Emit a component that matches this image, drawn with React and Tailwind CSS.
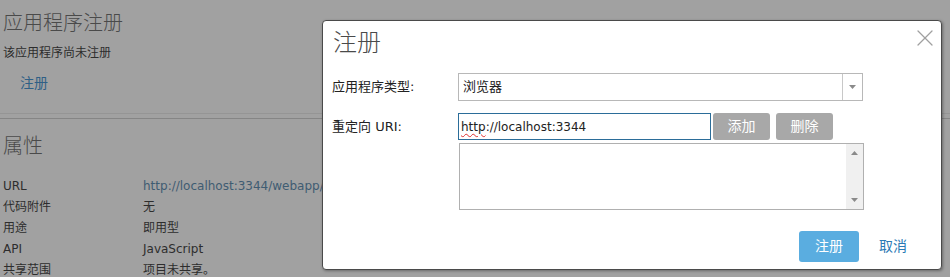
import { X } from 'lucide-react';

const font = { fontFamily: '"DejaVu Sans", "Noto Sans CJK SC", sans-serif' };

const props = [
  ['URL', 'http://localhost:3344/webapp/', true],
  ['代码附件', '无'],
  ['用途', '即用型'],
  ['API', 'JavaScript'],
  ['共享范围', '项目未共享。'],
];

function Caret({ up }) {
  return (
    <svg width="7" height="4" viewBox="0 0 7 4" className={up ? 'rotate-180' : ''}>
      <path d="M0 0 L7 0 L3.5 4 Z" fill="#8a8a8a" />
    </svg>
  );
}

function Dialog() {
  return (
    <div className="absolute left-[322px] top-[20px] w-[620px] h-[250px] bg-white rounded-[4px] border border-[#4a4a4a] shadow-[1px_1px_3px_rgba(0,0,0,0.35)] flex flex-col">
      <div className="flex justify-between items-start pl-[10px] pr-[2px] pt-[6px]">
        <h2 className="text-[24px] leading-[32px] font-light text-[#4a4a4a]">注册</h2>
        <X size={28} strokeWidth={1.1} className="-mt-[3px] text-[#a0a0a0]" />
      </div>

      <div className="flex flex-col pl-[9px] mt-[14px]">
        <div className="flex items-center">
          <div className="w-[126px] text-[13px] text-[#222]">应用程序类型:</div>
          <div className="w-[405px] h-[28px] border border-[#b8b8b8] flex items-center">
            <div className="flex-1 pl-[4px] text-[13px] text-[#222]">浏览器</div>
            <div className="w-[20px] h-full border-l border-[#c8c8c8] flex items-center justify-center">
              <Caret />
            </div>
          </div>
        </div>

        <div className="flex items-center mt-[12px]">
          <div className="w-[126px] text-[13px] text-[#222]">重定向 URI:</div>
          <div className="w-[253px] h-[27px] border border-[#2b6d99] flex items-center pl-[2px] text-[12px] text-[#222]">
            <span className="underline decoration-wavy decoration-[#e03030] decoration-1 underline-offset-2">http</span>
            <span>://localhost:3344</span>
          </div>
          <button className="ml-[2px] w-[57px] h-[27px] rounded-[3px] bg-[#a8a8a8] text-white text-[14px]">添加</button>
          <button className="ml-[6px] w-[57px] h-[27px] rounded-[3px] bg-[#a8a8a8] text-white text-[14px]">删除</button>
        </div>

        <div className="ml-[127px] mt-[3px] w-[405px] h-[67px] border border-[#b0b0b0] flex">
          <div className="flex-1" />
          <div className="w-[17px] bg-[#f0f0f0] flex flex-col items-center justify-between py-[7px]">
            <Caret up />
            <Caret />
          </div>
        </div>
      </div>

      <div className="flex justify-end items-center mt-auto mb-[7px] pr-[34px]">
        <button className="w-[60px] h-[31px] rounded-[3px] bg-[#5aade0] text-white text-[14px]">注册</button>
        <span className="ml-[20px] text-[14px] text-[#2a7ab5]">取消</span>
      </div>
    </div>
  );
}

export default function App() {
  return (
    <div className="relative w-[950px] h-[277px] overflow-hidden bg-[#a1a1a1]" style={font}>
      <div className="pl-[3px] pt-[10px] text-[#2d2d2d]">
        <h1 className="text-[20px] leading-[26px] font-light text-[#4a4a4a]">应用程序注册</h1>
        <p className="text-[12px] leading-[18px] mt-[8px]">该应用程序尚未注册</p>
        <p className="text-[14px] leading-[20px] mt-[11px] ml-[17px] text-[#2f5f86]">注册</p>
        <div className="mt-[20px] -ml-[3px] border-t border-[#959595]" />
        <div className="-ml-[3px] mt-[4px] border-t border-[#858585]" />
        <h1 className="text-[20px] leading-[26px] font-light text-[#4a4a4a] mt-[14px]">属性</h1>
        <div className="mt-[17px] text-[12px] leading-[21px]">
          {props.map(([k, v, link]) => (
            <div key={k} className="flex">
              <div className="w-[140px]">{k}</div>
              <div className={link ? 'text-[#3f5c72]' : ''}>{v}</div>
            </div>
          ))}
        </div>
      </div>
      <Dialog />
    </div>
  );
}
